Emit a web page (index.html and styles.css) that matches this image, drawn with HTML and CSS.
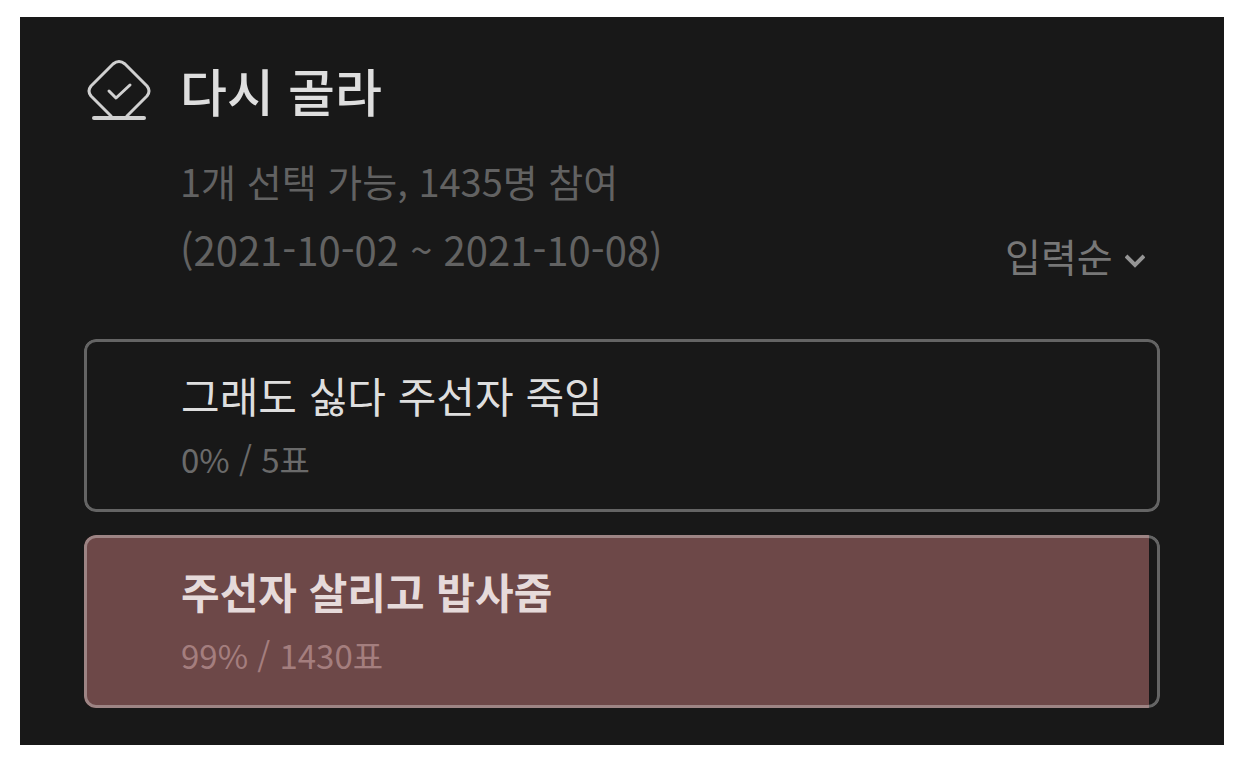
FILE: index.html
```html
<!DOCTYPE html>
<html lang="ko">
<head>
<meta charset="utf-8">
<meta name="viewport" content="width=device-width, initial-scale=1">
<title>다시 골라</title>
<link rel="stylesheet" href="styles.css">
</head>
<body>
<main class="poll">
  <header class="poll-header">
    <svg class="poll-icon" viewBox="0 0 64 64" aria-hidden="true">
      <path d="M24 58 L4 38 Q0 33 4 28 L26 6 Q32 1 38 6 L60 28 Q64 33 60 38 L40 58"/>
      <path class="base" d="M7 60 H57"/>
      <path d="M22 33 L29 40 L43 27"/>
    </svg>
    <h1 class="poll-title">다시 골라</h1>
  </header>
  <div class="poll-info">
    <div class="poll-meta">
      <p class="meta-count">1개 선택 가능, 1435명 참여</p>
      <p class="meta-dates">(2021-10-02 ~ 2021-10-08)</p>
    </div>
    <div class="sort">
      <select class="sort-select" aria-label="정렬">
        <option>입력순</option>
      </select>
      <svg class="sort-arrow" viewBox="0 0 20 14" aria-hidden="true"><path d="M1 2 L10 11 L19 2"/></svg>
    </div>
  </div>
  <ul class="options">
    <li class="option">
      <div class="option-name">그래도 싫다 주선자 죽임</div>
      <div class="option-votes">0% / 5표</div>
    </li>
    <li class="option is-winner">
      <div class="option-fill" style="width: 99%"></div>
      <div class="option-name">주선자 살리고 밥사줌</div>
      <div class="option-votes">99% / 1430표</div>
    </li>
  </ul>
</main>
</body>
</html>
```
FILE: styles.css
```css
* { box-sizing: border-box; }
body {
  margin: 0;
  padding: 17px 18px 20px 20px;
  background: #fff;
  font-family: "Noto Sans CJK KR", sans-serif;
}
h1, p, ul { margin: 0; padding: 0; }
.poll {
  padding: 36px 64px 37px;
  background: #181818;
  color: #dedede;
}
.poll-header {
  display: flex;
  align-items: center;
  gap: 29px;
  padding-left: 3px;
}
.poll-icon {
  width: 64px;
  height: 64px;
  flex: none;
  fill: none;
  stroke: #d0d0d0;
  stroke-width: 3;
  stroke-linecap: round;
  stroke-linejoin: round;
}
.poll-icon .base { stroke-width: 4; }
.poll-title {
  font-size: 51px;
  line-height: 74px;
  font-weight: 500;
}
.poll-info {
  display: flex;
  align-items: flex-end;
  justify-content: space-between;
  padding: 20px 15px 0 96px;
  color: #626262;
}
.meta-count { font-size: 38px; line-height: 68px; }
.meta-dates { font-size: 40px; line-height: 68px; }
.sort {
  display: flex;
  align-items: center;
  gap: 12px;
}
.sort-select {
  appearance: none;
  border: 0;
  padding: 0;
  background: transparent;
  color: #777;
  font: inherit;
  font-size: 39px;
  line-height: 56px;
}
.sort-arrow {
  width: 20px;
  height: 14px;
  margin-top: 12px;
  fill: none;
  stroke: #959595;
  stroke-width: 4;
}
.options {
  display: grid;
  gap: 23px;
  padding-top: 56px;
  list-style: none;
}
.option {
  position: relative;
  overflow: hidden;
  padding: 24px 97px 25px;
  border-radius: 12px;
}
.option::after {
  content: "";
  position: absolute;
  inset: 0;
  border: 3px solid rgba(255, 255, 255, 0.33);
  border-radius: inherit;
}
.option-name {
  position: relative;
  margin-bottom: 4px;
  font-size: 42px;
  line-height: 64px;
}
.option-votes {
  position: relative;
  font-size: 33px;
  line-height: 56px;
  color: #6a6a6a;
}
.option-fill {
  position: absolute;
  inset: 0 auto 0 0;
  background: #6d4848;
}
.is-winner .option-name { font-weight: 700; color: #e6dada; }
.is-winner .option-votes { color: #a47e7e; }
```
